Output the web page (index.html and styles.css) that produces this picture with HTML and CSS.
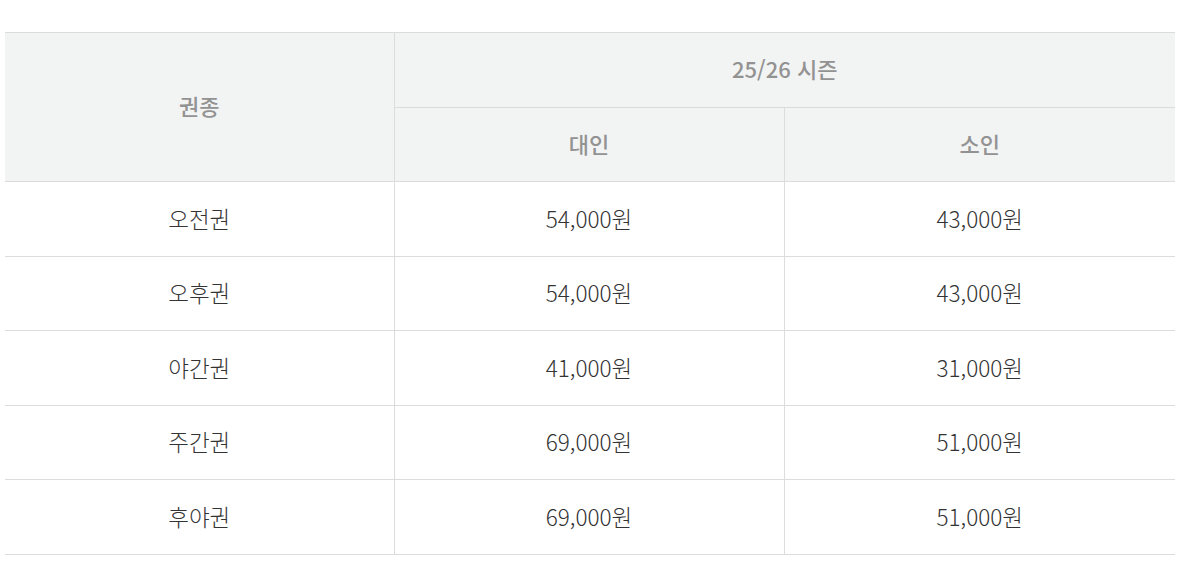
FILE: index.html
```html
<!DOCTYPE html>
<html lang="ko">
<head>
<meta charset="utf-8">
<link rel="stylesheet" href="styles.css">
</head>
<body>
<div class="wrap">
<table class="price">
<colgroup><col class="c1"><col class="c2"><col class="c3"></colgroup>
<thead>
<tr><th rowspan="2">권종</th><th colspan="2">25/26 시즌</th></tr>
<tr><th>대인</th><th>소인</th></tr>
</thead>
<tbody>
<tr><td>오전권</td><td>54,000원</td><td>43,000원</td></tr>
<tr><td>오후권</td><td>54,000원</td><td>43,000원</td></tr>
<tr><td>야간권</td><td>41,000원</td><td>31,000원</td></tr>
<tr><td>주간권</td><td>69,000원</td><td>51,000원</td></tr>
<tr><td>후야권</td><td>69,000원</td><td>51,000원</td></tr>
</tbody>
</table>
</div>
</body>
</html>
```
FILE: styles.css
```css
html, body { margin: 0; padding: 0; background: #fff; }
.wrap { padding: 32px 8px 0 5px; }
.price {
  width: 1170px;
  border-collapse: collapse;
  table-layout: fixed;
  font-family: "Noto Sans CJK KR", "Noto Sans", sans-serif;
  border-top: 1px solid #dcdcdc;
}
.c1 { width: 389px; }
.c2 { width: 390px; }
.c3 { width: 391px; }
.price th, .price td {
  border: 1px solid #dcdcdc;
  text-align: center;
  vertical-align: middle;
  padding: 0;
  line-height: 1.2;
}
.price tr > :first-child { border-left: none; }
.price tr > :last-child { border-right: none; }
.price th {
  background: #f2f3f3;
  color: #929292;
  font-size: 22px;
  font-weight: 500;
  height: 70.5px;
  padding-bottom: 3px;
}
.price td {
  color: #333;
  font-size: 22.5px;
  font-weight: 300;
  height: 72.5px;
  padding-bottom: 1px;
}
```
